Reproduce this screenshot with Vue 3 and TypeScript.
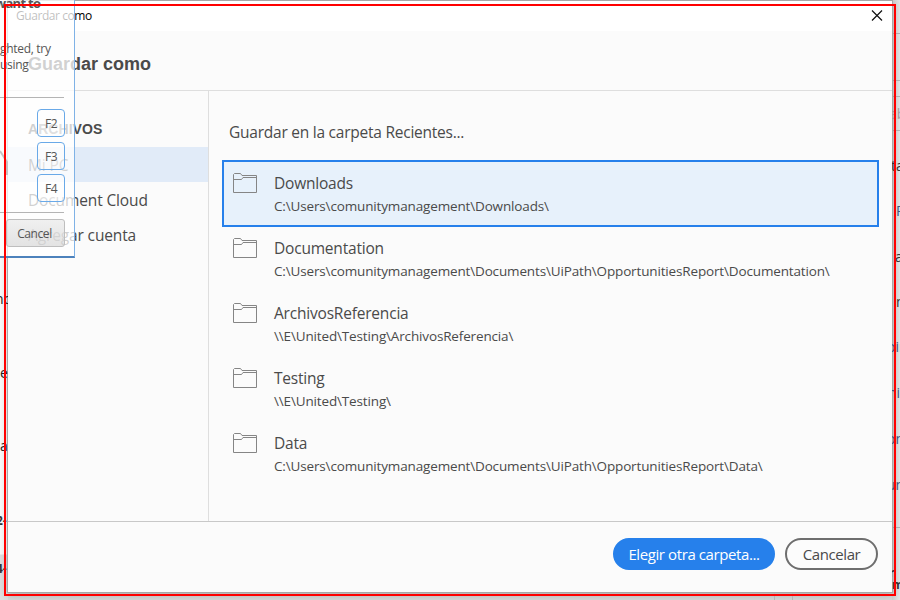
<script setup lang="ts">
interface Folder { name: string; path: string }
interface Fragment { text: string; x: number; y: number; bold?: boolean; color?: string }

const folders: Folder[] = [
  { name: 'Downloads', path: 'C:\\Users\\comunitymanagement\\Downloads\\' },
  { name: 'Documentation', path: 'C:\\Users\\comunitymanagement\\Documents\\UiPath\\OpportunitiesReport\\Documentation\\' },
  { name: 'ArchivosReferencia', path: '\\\\E\\United\\Testing\\ArchivosReferencia\\' },
  { name: 'Testing', path: '\\\\E\\United\\Testing\\' },
  { name: 'Data', path: 'C:\\Users\\comunitymanagement\\Documents\\UiPath\\OpportunitiesReport\\Data\\' },
]
const places = ['Mi PC', 'Document Cloud', 'Agregar cuenta']
const keys = ['F2', 'F3', 'F4']

const behind: Fragment[] = [
  { text: 'no', x: -5, y: 290, color: '#222' },
  { text: 'e', x: 0, y: 364, color: '#222' },
  { text: 'a', x: 0, y: 437, color: '#222' },
  { text: '2-', x: -4, y: 511, bold: true },
  { text: '4-', x: -4, y: 559, bold: true },
  { text: 'ab', x: 889, y: 105, color: '#a79a9c' },
  { text: 'ta', x: 891, y: 157 },
  { text: 'P', x: 896, y: 202, color: '#40577c' },
  { text: 'a', x: 895, y: 248 },
  { text: 'm', x: 896, y: 293 },
  { text: 'oin', x: 887, y: 338, color: '#40577c' },
  { text: 'ni', x: 888, y: 384, color: '#40577c' },
  { text: 'on', x: 887, y: 430, color: '#40577c' },
  { text: 'un', x: 887, y: 476, color: '#40577c' },
  { text: 'r', x: 889, y: 563, bold: true },
  { text: 'm', x: 892, y: 575, bold: true },
]
const rules = [33, 80, 96, 130, 527]
</script>

<template>
  <div class="screen">
    <div class="side left"></div>
    <div class="side right"></div>
    <i v-for="y in rules" :key="y" class="rule" :style="{ top: y + 'px' }"></i>

    <section class="dialog">
      <header class="titlebar">
        <span>Guardar como</span>
        <svg width="12" height="12" viewBox="0 0 12 12"><path d="M1 .5L11 10.5M11 .5L1 10.5" stroke="#111" stroke-width="1.2" /></svg>
      </header>
      <h1>Guardar como</h1>
      <div class="body">
        <nav>
          <h2>ARCHIVOS</h2>
          <div v-for="(p, i) in places" :key="p" class="place" :class="{ current: i === 0 }">{{ p }}</div>
        </nav>
        <main>
          <p class="lead">Guardar en la carpeta Recientes...</p>
          <div v-for="(f, i) in folders" :key="f.name" class="folder" :class="{ selected: i === 0 }">
            <svg width="26" height="22" viewBox="0 0 26 22" fill="none" stroke="#858585">
              <path d="M1.5 20.5V2.5L2.5 1.5H8.5L10 3.5H24.5V20.5Z" />
              <path d="M1.5 7.5H9.5L11 5.5H24.5" />
            </svg>
            <div class="label">
              <div class="name">{{ f.name }}</div>
              <div class="path">{{ f.path }}</div>
            </div>
          </div>
        </main>
      </div>
      <footer>
        <button class="primary">Elegir otra carpeta...</button>
        <button class="secondary">Cancelar</button>
      </footer>
    </section>

    <i class="tick"></i>
    <div class="edge edge-left">
      <span v-for="f in behind.slice(0, 5)" :key="f.y" class="fragment" :class="{ bold: f.bold }" :style="{ left: f.x + 'px', top: f.y + 'px', color: f.color }">{{ f.text }}</span>
    </div>
    <div class="edge edge-right">
      <span v-for="f in behind.slice(5)" :key="f.y" class="fragment" :class="{ bold: f.bold }" :style="{ left: f.x - 892 + 'px', top: f.y + 'px', color: f.color }">{{ f.text }}</span>
    </div>

    <aside class="ghost">
      <b class="g0">want to</b>
      <span class="g1">ghted, try</span>
      <span class="g2">using</span>
      <hr class="h1" />
      <div class="keys"><kbd v-for="k in keys" :key="k">{{ k }}</kbd></div>
      <hr class="h2" />
      <div class="cancel">Cancel</div>
    </aside>
    <svg class="stroke" width="8" height="28" viewBox="0 0 8 28"><path d="M0 2L7 13V26" fill="none" stroke="#c4c4c4" stroke-width="2" /></svg>
    <div class="frame"></div>
  </div>
</template>

<style>
body { margin: 0; overflow: hidden; }
</style>
<style scoped>
* { box-sizing: border-box; }
.screen { position: relative; width: 900px; height: 600px; overflow: hidden; background: #d8d8d8; font-family: "Open Sans", "Noto Sans", sans-serif; color: #4a4a4a; }
.side { position: absolute; top: 0; height: 600px; }
.left { left: 0; width: 8px; background: linear-gradient(#fafafa 0 554px, #dedede 555px); }
.right { left: 892px; width: 8px; background: linear-gradient(90deg, #d1d1d1, #e4e4e4); }
.rule { position: absolute; left: 893px; width: 7px; height: 1px; background: #b4b4b4; }
.tick { position: absolute; left: 774px; top: 593px; width: 19px; height: 7px; border: 1px solid #b5b5b5; border-width: 0 1px; }
.edge { position: absolute; top: 0; width: 8px; height: 600px; overflow: hidden; }
.edge-left { left: 0; }
.edge-right { left: 892px; }
.fragment { position: absolute; font-size: 14px; line-height: 17px; color: #333; white-space: nowrap; }
.fragment.bold { font-size: 12px; font-weight: 700; line-height: 19px; }
.dialog { position: absolute; left: 7px; top: 0; width: 886px; height: 593px; display: flex; flex-direction: column; border: 1px solid #a7a7a7; background: #fbfbfb; box-shadow: 0 2px 8px rgba(0, 0, 0, .22); }
.titlebar { display: flex; flex: none; justify-content: space-between; align-items: center; height: 30px; padding: 0 9px 0 8px; background: #fff; font-size: 12px; line-height: 16px; color: #000; letter-spacing: -.43px; }
h1 { flex: none; height: 60px; margin: 0; padding: 21px 20px 0; border-bottom: 1px solid #dedede; font: 700 18px/24px "Liberation Sans", sans-serif; }
.body { display: flex; flex: none; height: 430px; }
nav { width: 201px; border-right: 1px solid #dedede; }
h2 { height: 56px; margin: 0; padding: 28px 20px 0; font: 700 14px/20px "Liberation Sans", sans-serif; letter-spacing: .05px; }
.place { height: 35px; padding: 0 20px; font-size: 15.5px; line-height: 37px; letter-spacing: -.13px; }
.current { background: #e1ebf8; }
main { flex: 1; padding: 0 13px; }
.lead { height: 69px; margin: 0; padding: 29px 7px 0; font-size: 15.5px; line-height: 24px; letter-spacing: -.24px; }
.folder { display: flex; height: 65px; padding: 12px 8px 0 10px; white-space: nowrap; }
.folder svg { flex: none; }
.folder.selected { height: 67px; margin-bottom: -2px; padding: 10px 8px 0; border: 2px solid #2680eb; background: #e7f1fb; }
.label { margin: -2px 0 0 16px; }
.name { height: 26px; font-size: 15.5px; line-height: 26px; letter-spacing: -.2px; }
.path { height: 20px; font-size: 13.5px; line-height: 20px; letter-spacing: -.15px; }
footer { display: flex; flex: 1; gap: 10px; justify-content: flex-end; padding: 16px 14px 0; border-top: 1px solid #c8c8c8; }
button { height: 32px; padding: 0; border: 2px solid #6e6e6e; border-radius: 16px; background: #fcfcfc; color: #4a4a4a; font: 15px/26px "Open Sans", sans-serif; letter-spacing: -.4px; white-space: nowrap; }
.primary { width: 162px; border-color: #2680eb; background: #2680eb; color: #fff; }
.secondary { width: 93px; }
.ghost { position: absolute; left: 0; top: 0; width: 75px; height: 258px; border-right: 1px solid #7fb2e6; border-bottom: 2px solid #4d82bc; background: rgba(255, 255, 255, .75); overflow: hidden; font-size: 12px; color: #555; }
.ghost b, .ghost span { position: absolute; line-height: 16px; white-space: nowrap; letter-spacing: -.3px; }
.ghost .g0 { left: -5px; top: -5px; font-size: 13px; letter-spacing: -.7px; }
.g1 { left: 0; top: 41px; }
.g2 { left: 0; top: 57px; }
.ghost hr { position: absolute; left: 0; width: 64px; margin: 0; border: 0; border-top: 1px solid #b4b4b4; }
.h1 { top: 97px; }
.h2 { top: 212px; }
.keys { position: absolute; left: 37px; top: 109px; display: flex; flex-direction: column; gap: 4.5px; }
kbd { width: 28px; height: 28px; border: 1px solid #69a9e8; border-radius: 4px; background: rgba(255, 255, 255, .3); font: 12px/28px "Open Sans", sans-serif; letter-spacing: -.5px; text-align: center; }
.cancel { position: absolute; left: 6px; top: 219px; width: 59px; height: 28px; padding-right: 2px; border: 1px solid #bebebe; border-radius: 3px; background: linear-gradient(rgba(228, 228, 228, .55), rgba(205, 205, 205, .55)); line-height: 27px; text-align: center; letter-spacing: -.4px; }
.stroke { position: absolute; left: 0; top: 149px; }
.frame { position: absolute; left: 4px; top: 4px; width: 892px; height: 592px; border: 2px solid #f00; }
</style>
